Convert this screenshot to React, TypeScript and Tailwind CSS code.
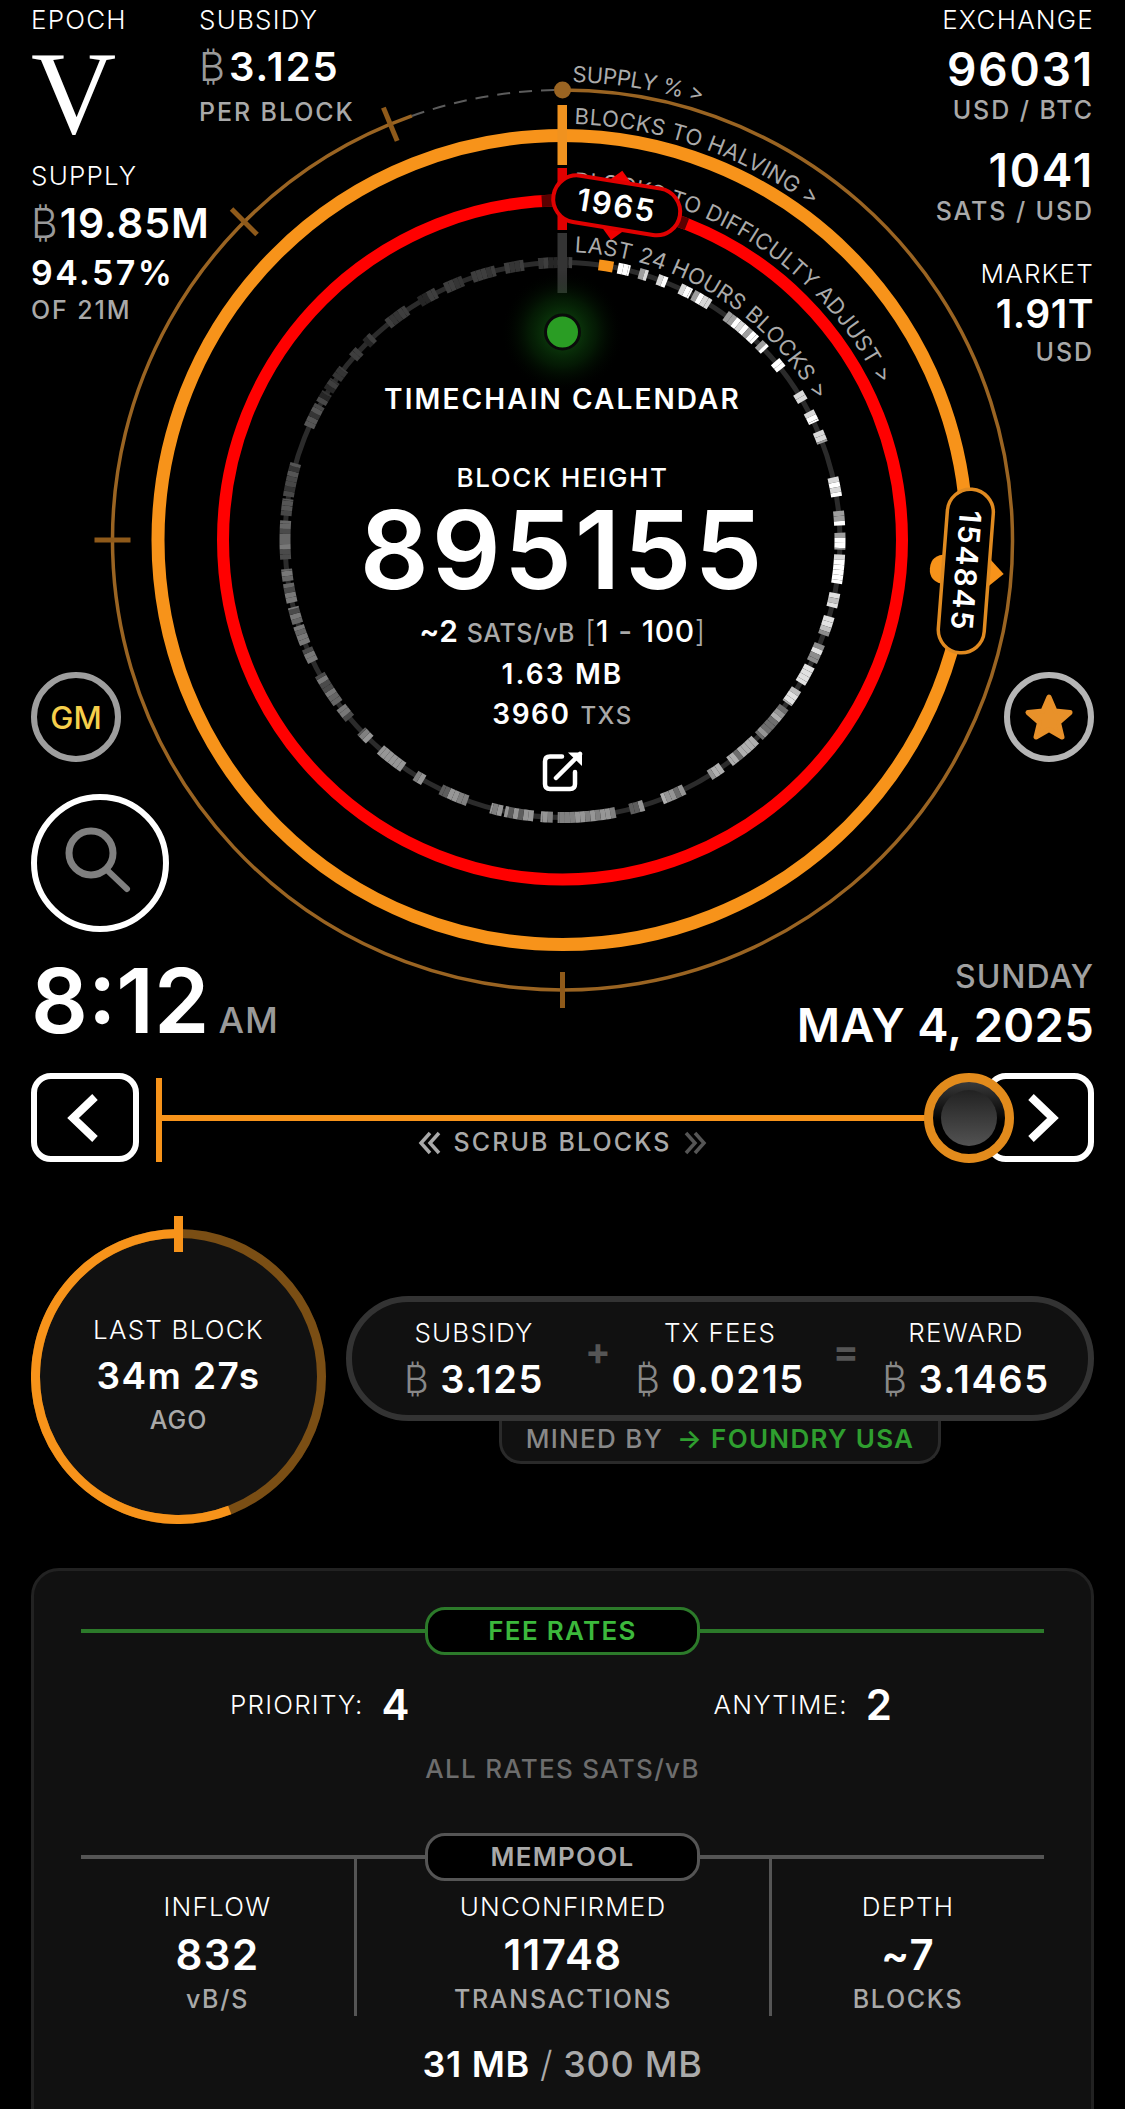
import React from "react";

const CX = 562.5;
const CY = 540;
const pt = (r: number, deg: number) => {
  const a = (deg * Math.PI) / 180;
  return [CX + r * Math.sin(a), CY - r * Math.cos(a)];
};
const arc = (r: number, from: number, to: number) => {
  const [x1, y1] = pt(r, from);
  const [x2, y2] = pt(r, to);
  const large = to - from > 180 ? 1 : 0;
  return `M${x1.toFixed(2)} ${y1.toFixed(2)}A${r} ${r} 0 ${large} 1 ${x2.toFixed(2)} ${y2.toFixed(2)}`;
};

const SEGS: [number, number][] = [
  [11.5, 14], [16, 17.8], [20, 22], [25, 27.5], [28, 32], [36, 44], [45, 46.8], [50, 52], [58, 60], [62.5, 65], [67, 69.5],
  [77, 81], [84, 87], [88.5, 92], [93, 99], [101, 104], [106, 110], [112, 116], [117, 121], [122.5, 126], [127, 135],
  [136, 143], [145, 148], [154, 159], [163, 166], [169, 181], [182, 184.5], [186, 192], [192.5, 195], [200, 206], [210, 212],
  [215, 221], [224, 226.5], [230, 233], [234, 241], [244, 247], [248, 252], [252.5, 256], [257, 261], [261.5, 264], [266, 274],
  [275, 278.5], [279, 286], [294, 299], [299.5, 302], [302.5, 305], [305.5, 308], [311, 313], [315, 317], [321, 326], [329, 333],
  [335, 339], [341, 346], [348, 352], [355, 359], [359.2, 362],
];
const level = (d: number) => {
  if (d < 100) return 255;
  if (d < 125) return 225;
  if (d < 160) return 175;
  if (d < 230) return 150;
  if (d < 275) return 120;
  if (d < 300) return 85;
  return 62;
};
const BLOCKS = SEGS.flatMap(([a, b]) => {
  const out: { a: number; b: number; c: string }[] = [];
  for (let d = a; d < b; d += 1.05) {
    const e = Math.min(b, d + 1.05);
    const noise = Math.abs(Math.sin(d * 12.9898) * 43758.5453) % 1;
    const base = level(d);
    const v = Math.round(base * (noise > 0.78 ? 0.62 : noise > 0.5 ? 0.85 : 1));
    out.push({ a: d, b: e, c: `rgb(${v},${v},${v})` });
  }
  return out;
});

function Btc({ className }: { className: string }) {
  return <span className={className}>₿</span>;
}

function Rings() {
  const ticks = [180, 270, 315, 337.5];
  return (
    <svg className="absolute left-0 top-0" width="1125" height="1060" viewBox="0 0 1125 1060" fill="none">
      <defs>
        <radialGradient id="glow">
          <stop offset="0%" stopColor="#1f9a1f" stopOpacity="0.55" />
          <stop offset="55%" stopColor="#0f5a0f" stopOpacity="0.28" />
          <stop offset="100%" stopColor="#000" stopOpacity="0" />
        </radialGradient>
        <path id="p-supply" d={arc(458, 0, 90)} />
        <path id="p-halving" d={arc(416, 0, 90)} />
        <path id="p-diff" d={arc(352, 0, 90)} />
        <path id="p-last" d={arc(288, 0, 90)} />
      </defs>

      <path d={arc(450, 0, 340.45)} stroke="#9a6422" strokeWidth="3.5" />
      <path d={arc(450, 340.45, 360)} stroke="#5c5c5c" strokeWidth="2" strokeDasharray="13 9" />
      {ticks.map((t) => {
        const [x1, y1] = pt(432, t);
        const [x2, y2] = pt(468, t);
        return <line key={t} x1={x1} y1={y1} x2={x2} y2={y2} stroke="#8f5a1a" strokeWidth="5" />;
      })}

      <circle cx={CX} cy={CY} r="404.5" stroke="#f7931a" strokeWidth="13" />
      <path d={arc(404.5, 86, 103)} stroke="#5c3a10" strokeWidth="13" />
      <circle cx={CX} cy={CY} r="339.5" stroke="#ff0000" strokeWidth="12" />
      <path d={arc(339.5, -3.5, 21.5)} stroke="#5a0000" strokeWidth="12" />

      <circle cx={CX} cy={CY} r="277.5" stroke="#2b2b2b" strokeWidth="5" />
      <path d={arc(277.5, 7.5, 10.5)} stroke="#f7931a" strokeWidth="11" />
      {BLOCKS.map((b) => (
        <path key={b.a} d={arc(277.5, b.a, b.b)} stroke={b.c} strokeWidth="11" />
      ))}

      <rect x="557.5" y="105" width="9.5" height="60" fill="#f0921f" />
      <rect x="557.5" y="168" width="9.5" height="62" fill="#e00000" />
      <rect x="557.5" y="233" width="9.5" height="60" fill="#343434" />

      <circle cx="562.5" cy="90" r="8.5" fill="#9a6422" />

      <g fill="#ababab" fontFamily="Inter, sans-serif" fontSize="22">
        <text>
          <textPath href="#p-supply" startOffset="10" textLength="131" lengthAdjust="spacing">SUPPLY % &gt;</textPath>
        </text>
        <text>
          <textPath href="#p-halving" startOffset="12" textLength="255" lengthAdjust="spacing">BLOCKS TO HALVING &gt;</textPath>
        </text>
        <text>
          <textPath href="#p-diff" startOffset="12" textLength="380" lengthAdjust="spacing">BLOCKS TO DIFFICULTY ADJUST &gt;</textPath>
        </text>
        <text>
          <textPath href="#p-last" startOffset="12" textLength="295" lengthAdjust="spacing">LAST 24 HOURS BLOCKS &gt;</textPath>
        </text>
      </g>

      <circle cx="562.5" cy="332" r="62" fill="url(#glow)" />
      <circle cx="562.5" cy="332" r="17" fill="#2a9d24" stroke="#0a0a0a" strokeWidth="3" />

      <g transform="rotate(9.2 562.5 540) translate(562.5 201)">
        <path d="M0 -35 L17 -18 L17 18 L0 35 L-17 18 L-17 -18 Z" fill="#f00000" />
        <rect x="-64" y="-23.5" width="128" height="47" rx="23.5" fill="#000" stroke="#e00000" strokeWidth="4" />
        <text x="0" y="11" textAnchor="middle" fill="#fff" fontFamily="Inter, sans-serif" fontWeight="600" fontSize="31" letterSpacing="2">1965</text>
      </g>

      <g transform="rotate(94.4 562.5 540) translate(562.5 135.5)">
        <path d="M-15 -22 L0 -38 L15 -22 L15 20 Q14 36 0 36 Q-14 36 -15 20 Z" fill="#f7931a" />
        <rect x="-82" y="-23" width="164" height="46" rx="23" fill="#000" stroke="#e08a20" strokeWidth="3.5" />
        <text x="0" y="10.5" textAnchor="middle" fill="#fff" fontFamily="Inter, sans-serif" fontWeight="600" fontSize="30" letterSpacing="2">154845</text>
      </g>
    </svg>
  );
}

function StatLabel({ children, className }: { children: React.ReactNode; className: string }) {
  return <div className={`text-[26px] leading-none font-light tracking-[1.2px] text-white ${className}`}>{children}</div>;
}
function StatSub({ children, className }: { children: React.ReactNode; className: string }) {
  return <div className={`text-[25px] leading-none font-medium text-[#a9a9a9] tracking-[1.9px] ${className}`}>{children}</div>;
}

function BlockRing() {
  const r = 143;
  const c = 147.5;
  const p = (deg: number) => {
    const a = (deg * Math.PI) / 180;
    return `${(c + r * Math.sin(a)).toFixed(2)} ${(c - r * Math.cos(a)).toFixed(2)}`;
  };
  return (
    <svg className="absolute left-0 top-0" width="295" height="295" fill="none">
      <circle cx={c} cy={c} r={r} stroke="#7a4e14" strokeWidth="9" />
      <path d={`M${p(159)}A${r} ${r} 0 1 1 ${p(360)}`} stroke="#f7931a" strokeWidth="9" />
    </svg>
  );
}

function RewardCol({ label, value, width }: { label: string; value: string; width: string }) {
  return (
    <div className={`flex flex-col items-center ${width}`}>
      <div className="text-[26px] leading-none font-light tracking-[1.2px] text-white">{label}</div>
      <div className="mt-[14px] flex items-baseline gap-[10px] text-[38px] leading-none font-semibold tracking-[1.6px] text-white">
        <Btc className="font-light text-[#888888] text-[38px]" />
        <span>{value}</span>
      </div>
    </div>
  );
}

function Header({ title, line, pill }: { title: string; line: string; pill: string }) {
  return (
    <div className="relative z-10 flex items-center">
      <div className={`h-[4px] flex-1 ${line}`} />
      <div className={`flex h-[48px] w-[275px] items-center justify-center rounded-[20px] border-[3px] bg-black text-[26px] leading-none font-semibold tracking-[1.3px] ${pill}`}>
        {title}
      </div>
      <div className={`h-[4px] flex-1 ${line}`} />
    </div>
  );
}

function MemStat({ label, value, unit, className }: { label: string; value: string; unit: string; className: string }) {
  return (
    <div className={`flex flex-col items-center pt-[35px] ${className}`}>
      <div className="text-[26px] leading-none font-light tracking-[1.2px] text-white">{label}</div>
      <div className="mt-[14px] text-[42px] leading-none font-semibold tracking-[1.4px] text-white">{value}</div>
      <div className="mt-[11px] text-[25px] leading-none font-medium tracking-[1.7px] text-[#a9a9a9]">{unit}</div>
    </div>
  );
}

export default function App() {
  return (
    <div className="h-[2109px] w-[1125px] overflow-hidden bg-black font-['Inter',sans-serif] text-white">
      <section className="relative h-[1060px] px-[31px] pt-[7px]">
        <Rings />

        <div className="relative flex items-start justify-between">
          <div className="flex flex-col">
            <div className="flex items-start">
              <div className="w-[168px]">
                <StatLabel className="">EPOCH</StatLabel>
                <div className="mt-[2px] font-['Liberation_Serif',serif] text-[118px] leading-none">V</div>
              </div>
              <div>
                <StatLabel className="">SUBSIDY</StatLabel>
                <div className="mt-[14px] flex items-baseline gap-[2px] text-[40px] leading-none font-semibold tracking-[2px]">
                  <Btc className="font-light text-[#9a9a9a]" />
                  <span>3.125</span>
                </div>
                <StatSub className="mt-[13px]">PER BLOCK</StatSub>
              </div>
            </div>
            <StatLabel className="mt-[10px]">SUPPLY</StatLabel>
            <div className="mt-[14px] flex items-baseline gap-[1px] text-[41px] leading-none font-semibold tracking-[1px]">
              <Btc className="font-light text-[#9a9a9a]" />
              <span>19.85M</span>
            </div>
            <div className="mt-[12px] text-[34px] leading-none font-semibold tracking-[2.4px]">94.57%</div>
            <StatSub className="mt-[8px]">OF 21M</StatSub>
          </div>

          <div className="flex flex-col items-end">
            <StatLabel className="">EXCHANGE</StatLabel>
            <div className="mt-[13px] text-[46px] leading-none font-semibold tracking-[1.8px]">96031</div>
            <StatSub className="mt-[6px]">USD / BTC</StatSub>
            <div className="mt-[24px] text-[46px] leading-none font-semibold tracking-[1.8px]">1041</div>
            <StatSub className="mt-[6px]">SATS / USD</StatSub>
            <StatLabel className="mt-[37px]">MARKET</StatLabel>
            <div className="mt-[7px] text-[39px] leading-none font-semibold tracking-[0.5px]">1.91T</div>
            <StatSub className="mt-[7px]">USD</StatSub>
          </div>
        </div>

        <div className="absolute left-0 right-0 top-[385px] flex flex-col items-center">
          <div className="text-[28px] leading-none font-semibold tracking-[2.1px]">TIMECHAIN CALENDAR</div>
          <div className="mt-[52px] text-[26px] leading-none font-medium tracking-[1.6px]">BLOCK HEIGHT</div>
          <div className="mt-[5px] text-[108px] leading-none font-semibold tracking-[3px]">895155</div>
          <div className="mt-[12px] flex items-baseline text-[30px] leading-none font-semibold tracking-[0.6px]">
            <span>~2</span>
            <span className="ml-[8px] text-[25px] font-medium text-[#a9a9a9]">SATS/vB</span>
            <span className="ml-[10px] font-light text-[#a9a9a9]">[</span>
            <span className="font-medium">1</span>
            <span className="mx-[9px] font-medium text-[#a9a9a9]">-</span>
            <span className="font-medium">100</span>
            <span className="font-light text-[#a9a9a9]">]</span>
          </div>
          <div className="mt-[14px] text-[28px] leading-none font-semibold tracking-[2.1px]">1.63 MB</div>
          <div className="mt-[12px] flex items-baseline text-[28px] leading-none font-semibold tracking-[1.5px]">
            <span>3960</span>
            <span className="ml-[10px] text-[24px] font-medium text-[#a9a9a9]">TXS</span>
          </div>
          <svg className="mt-[22px]" width="42" height="42" viewBox="0 0 42 42" fill="none" stroke="#fff" strokeWidth="4.5">
            <path d="M20 6.5 H8 Q3 6.5 3 11.5 V34 Q3 39 8 39 H28 Q33 39 33 34 V22" strokeLinecap="round" />
            <path d="M14 28 L38 4" strokeLinecap="round" />
            <path d="M26 2.5 H40 V16 Z" fill="#fff" stroke="none" />
          </svg>
        </div>

        <div className="relative mt-[307px] flex items-center justify-between">
          <div className="flex h-[90px] w-[90px] items-center justify-center rounded-full border-[6px] border-[#9e9e9e] bg-black text-[31px] leading-none font-medium text-[#f6cf4b]">
            GM
          </div>
          <div className="flex h-[90px] w-[90px] items-center justify-center rounded-full border-[6px] border-[#b5b5b5] bg-black">
            <svg width="52" height="50" viewBox="0 0 52 50">
              <path d="M26 5 L32 19 L47 20.5 L35.5 30.5 L39 45 L26 37.5 L13 45 L16.5 30.5 L5 20.5 L20 19 Z" fill="#e8912a" stroke="#e8912a" strokeWidth="5" strokeLinejoin="round" />
            </svg>
          </div>
        </div>

        <div className="relative mt-[32px] flex h-[138px] w-[138px] items-center justify-center rounded-full border-[6px] border-white bg-black">
          <svg width="74" height="74" viewBox="0 0 74 74" fill="none" stroke="#808080" strokeLinecap="round">
            <circle cx="28" cy="27" r="22" strokeWidth="7" />
            <path d="M44 44 L64 63" strokeWidth="6" />
          </svg>
        </div>

        <div className="relative mt-[24px] flex items-start justify-between">
          <div className="flex items-baseline">
            <span className="text-[89px] leading-none font-semibold">8:12</span>
            <span className="ml-[9px] text-[36px] leading-none font-medium tracking-[1px] text-[#9a9a9a]">AM</span>
          </div>
          <div className="flex flex-col items-end pt-[5px]">
            <div className="text-[32px] leading-none font-medium tracking-[1px] text-[#a0a0a0]">SUNDAY</div>
            <div className="mt-[8px] text-[47px] leading-none font-semibold tracking-[0.3px]">MAY 4, 2025</div>
          </div>
        </div>
      </section>

      <div className="mt-[13px] flex h-[89px] items-center px-[31px]">
        <div className="flex h-[89px] w-[108px] items-center justify-center rounded-[20px] border-[6px] border-white pr-[5px]">
          <svg width="36" height="48" viewBox="0 0 36 48" fill="none" stroke="#fff" strokeWidth="8">
            <path d="M30 3 L8 24 L30 45" />
          </svg>
        </div>
        <div className="relative ml-[17px] flex h-[89px] flex-1 items-center">
          <div className="h-[84px] w-[6px] self-end bg-[#f7931a]" />
          <div className="h-[6px] flex-1 bg-[#f7931a]" />
          <div className="absolute -right-[28px] top-0 z-10 flex h-[90px] w-[90px] items-center justify-center rounded-full border-[9px] border-[#e28b1c] bg-[linear-gradient(180deg,#3a3a3a,#000000_55%)]">
            <div className="h-[56px] w-[56px] rounded-full bg-[linear-gradient(180deg,#222222,#525252)]" />
          </div>
        </div>
        <div className="flex h-[89px] w-[108px] items-center justify-center rounded-[20px] border-[6px] border-white pl-[6px]">
          <svg width="36" height="48" viewBox="0 0 36 48" fill="none" stroke="#fff" strokeWidth="8">
            <path d="M6 3 L28 24 L6 45" />
          </svg>
        </div>
      </div>

      <div className="-mt-[32px] flex items-center justify-center gap-[12px] text-[25px] leading-none font-medium tracking-[2.1px] text-[#a9a9a9]">
        <svg width="24" height="24" viewBox="0 0 24 24" fill="none" stroke="#a9a9a9" strokeWidth="3.5">
          <path d="M12 2 L3 12 L12 22 M21 2 L12 12 L21 22" />
        </svg>
        <span>SCRUB BLOCKS</span>
        <svg width="24" height="24" viewBox="0 0 24 24" fill="none" stroke="#555555" strokeWidth="3.5">
          <path d="M3 2 L12 12 L3 22 M12 2 L21 12 L12 22" />
        </svg>
      </div>

      <div className="mt-[74px] flex items-start px-[31px]">
        <div className="relative flex h-[295px] w-[295px] flex-col items-center rounded-full bg-[#111111] pt-[88px]">
          <BlockRing />
          <div className="absolute -top-[13px] left-[143px] h-[36px] w-[9px] bg-[#f7931a]" />
          <div className="text-[26px] leading-none font-light tracking-[1.2px]">LAST BLOCK</div>
          <div className="mt-[14px] text-[37px] leading-none font-semibold tracking-[1.4px]">34m 27s</div>
          <div className="mt-[14px] text-[25px] leading-none font-medium tracking-[1px] text-[#a9a9a9]">AGO</div>
        </div>

        <div className="ml-[20px] mt-[67px] flex flex-1 flex-col items-center">
          <div className="relative z-10 flex h-[125px] w-full items-start rounded-full border-[6px] border-[#333333] bg-[#111111] pl-[11px] pt-[18px]">
            <RewardCol label="SUBSIDY" value="3.125" width="w-[222px]" />
            <div className="mt-[12px] w-[22px] text-center text-[38px] leading-none font-bold text-[#555555]">+</div>
            <RewardCol label="TX FEES" value="0.0215" width="w-[226px]" />
            <div className="mt-[12px] w-[22px] text-center text-[38px] leading-none font-bold text-[#555555]">=</div>
            <RewardCol label="REWARD" value="3.1465" width="w-[222px]" />
          </div>
          <div className="flex h-[43px] w-[442px] items-start justify-center gap-[14px] rounded-b-[22px] border-[3px] border-t-0 border-[#2a2a2a] bg-[#111111] pt-[5px] text-[26px] leading-none font-medium tracking-[1.3px]">
            <span className="text-[#888888]">MINED BY</span>
            <span className="font-semibold text-[#2f9e2f]">→ FOUNDRY USA</span>
          </div>
        </div>
      </div>

      <div className="mx-[31px] mt-[44px] h-[600px] rounded-[28px] border-[3px] border-[#222222] bg-[#111111] px-[47px] pt-[36px]">
        <Header title="FEE RATES" line="bg-[#2c7a2a]" pill="border-[#2c7a2a] text-[#3cb83c]" />
        <div className="mt-[29px] flex items-center justify-center gap-[304px] pr-[3px]">
          <div className="flex items-center gap-[18px]">
            <span className="text-[26px] leading-none font-light tracking-[1.2px]">PRIORITY:</span>
            <span className="text-[42px] leading-none font-semibold">4</span>
          </div>
          <div className="flex items-center gap-[18px]">
            <span className="text-[26px] leading-none font-light tracking-[1.2px]">ANYTIME:</span>
            <span className="text-[42px] leading-none font-semibold">2</span>
          </div>
        </div>
        <div className="mt-[30px] text-center text-[26px] leading-none font-medium tracking-[1.3px] text-[#6d6d6d]">ALL RATES SATS/vB</div>
        <div className="mt-[51px]">
          <Header title="MEMPOOL" line="bg-[#555555]" pill="border-[#555555] text-[#a9a9a9]" />
        </div>
        <div className="-mt-[22px] flex h-[157px]">
          <MemStat label="INFLOW" value="832" unit="vB/S" className="w-[273px]" />
          <MemStat label="UNCONFIRMED" value="11748" unit="TRANSACTIONS" className="w-[418px] border-x-[3px] border-[#555555]" />
          <MemStat label="DEPTH" value="~7" unit="BLOCKS" className="flex-1" />
        </div>
        <div className="mt-[30px] flex items-baseline justify-center gap-[10px] text-[36px] leading-none font-semibold tracking-[0.7px]">
          <span>31 MB</span>
          <span className="font-light text-[#aaaaaa]">/</span>
          <span className="font-medium text-[#aaaaaa]">300 MB</span>
        </div>
      </div>
    </div>
  );
}
